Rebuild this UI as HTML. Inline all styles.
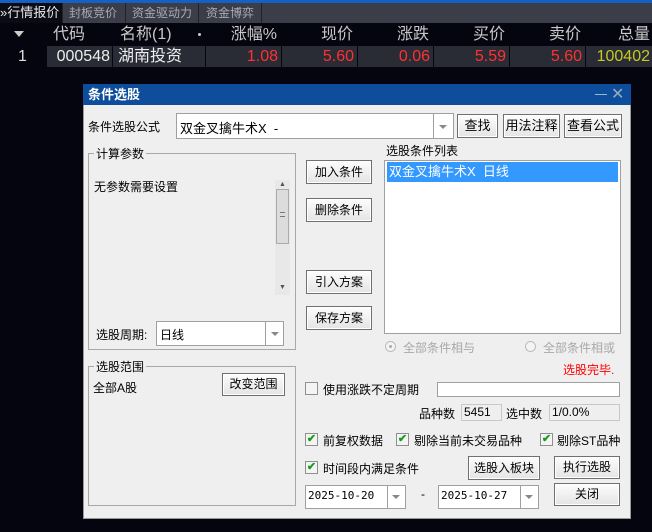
<!DOCTYPE html>
<html><head><meta charset="utf-8"><style>
*{margin:0;padding:0;box-sizing:border-box}
body{width:652px;height:532px;background:#05050f;position:relative;overflow:hidden;font-family:"Liberation Sans","Noto Sans CJK SC",sans-serif;}
.a{position:absolute;white-space:nowrap}
.tab{position:absolute;top:3px;height:20px;background:#3b3e49;color:#a8aab2;font-size:12px;line-height:20px;padding-left:6px;white-space:nowrap;overflow:hidden}
.cell{position:absolute;top:46px;height:21px;background:#2a2c35;font-size:16px;line-height:21px;text-align:right;padding-right:3px;white-space:nowrap}
.hd{position:absolute;top:24px;height:21px;color:#c8c8c8;font-size:16px;line-height:21px;text-align:right;white-space:nowrap}
.dl{font-size:12px;color:#000}
.btn{position:absolute;background:linear-gradient(#fdfdfd,#e4e4e4);border:1px solid #707070;box-shadow:inset 0 0 0 1px #fff;font-size:12px;text-align:center;color:#000;white-space:nowrap}
.box{position:absolute;background:#fff;border:1px solid #a0a0a0}
.grp{position:absolute;border:1px solid #a8a8a8}
.cb{position:absolute;width:13px;height:13px;border:1px solid #8f8f8f;background:#f4f4f4;color:#1a9a1a;font-size:11px;line-height:11px;text-align:center;font-weight:bold}
.dd{position:absolute;width:0;height:0;border-left:4px solid transparent;border-right:4px solid transparent;border-top:4px solid #888}
</style></head><body>
<div class="a" style="left:0;top:0;width:652px;height:3px;background:#1560c4"></div>
<div class="a" style="left:0;top:3px;width:652px;height:20px;background:#3b3e49"></div>
<div class="tab" style="left:0;width:62px;background:#0b0b16;color:#e8e8e8;padding-left:0;font-size:13px">»行情报价</div>
<div class="tab" style="left:62px;width:63px;border-left:1px solid #222;padding-left:6px">封板竞价</div>
<div class="tab" style="left:125px;width:73px;border-left:1px solid #222;padding-left:6px">资金驱动力</div>
<div class="tab" style="left:198px;width:64px;border-left:1px solid #222;border-right:1px solid #222;padding-left:7px">资金博弈</div>

<div class="a" style="left:14px;top:31px;border-left:5px solid transparent;border-right:5px solid transparent;border-top:6px solid #ccc"></div>
<div class="a" style="left:53px;top:24px;color:#c8c8c8;font-size:16px;line-height:21px">代码</div>
<div class="a" style="left:120px;top:24px;color:#c8c8c8;font-size:16px;line-height:21px">名称(1)</div>
<div class="a" style="left:198px;top:33px;width:3px;height:3px;background:#ccc;border-radius:2px"></div>
<div class="hd" style="left:205px;width:72px">涨幅%</div>
<div class="hd" style="left:281px;width:72px">现价</div>
<div class="hd" style="left:357px;width:72px">涨跌</div>
<div class="hd" style="left:433px;width:72px">买价</div>
<div class="hd" style="left:509px;width:72px">卖价</div>
<div class="hd" style="left:585px;width:65px">总量</div>

<div class="a" style="left:18px;top:46px;color:#ddd;font-size:16px;line-height:21px">1</div>
<div class="cell" style="left:47px;width:65px;color:#eee;padding-right:2px">000548</div>
<div class="cell" style="left:113px;width:92px;color:#eee;text-align:left;padding-left:5px">湖南投资</div>
<div class="cell" style="left:206px;width:75px;color:#ff3030">1.08</div>
<div class="cell" style="left:282px;width:75px;color:#ff3030">5.60</div>
<div class="cell" style="left:358px;width:75px;color:#ff3030">0.06</div>
<div class="cell" style="left:434px;width:75px;color:#ff3030">5.59</div>
<div class="cell" style="left:510px;width:75px;color:#ff3030">5.60</div>
<div class="cell" style="left:586px;width:66px;color:#c8c81e;padding-right:2px">100402</div>

<!-- dialog -->
<div class="a" style="left:83px;top:84px;width:548px;height:435px;background:#efefef;border:1px solid #999"></div>
<div class="a" style="left:83px;top:84px;width:548px;height:21px;background:#0d4d9b"></div>
<div class="a" style="left:88px;top:85px;color:#fff;font-size:13px;font-weight:bold;line-height:20px">条件选股</div>
<div class="a" style="left:595px;top:94px;width:12px;height:1px;background:#9bb"></div>
<div class="a" style="left:611px;top:87px;color:#9ab;font-size:16px;line-height:16px">✕</div>

<div class="a dl" style="left:88px;top:118px">条件选股公式</div>
<div class="box" style="left:176px;top:113px;width:278px;height:26px"></div>
<div class="a" style="left:433px;top:114px;width:1px;height:24px;background:#a0a0a0"></div>
<div class="dd" style="left:439px;top:125px"></div>
<div class="a dl" style="left:180px;top:118px;font-size:13px">双金叉擒牛术X&nbsp; -</div>
<div class="btn" style="left:457px;top:114px;width:41px;height:24px;line-height:22px;font-size:13px">查找</div>
<div class="btn" style="left:503px;top:114px;width:57px;height:24px;line-height:22px;font-size:13px">用法注释</div>
<div class="btn" style="left:564px;top:114px;width:58px;height:24px;line-height:22px;font-size:13px">查看公式</div>

<div class="grp" style="left:88px;top:153px;width:208px;height:197px"></div>
<div class="a dl" style="left:94px;top:145px;background:#efefef;padding:0 2px;font-size:12px">计算参数</div>
<div class="a dl" style="left:94px;top:178px;font-size:12px">无参数需要设置</div>
<div class="a" style="left:275px;top:180px;width:15px;height:115px;background:#e8e8e8"></div>
<div class="a" style="left:276px;top:189px;width:13px;height:55px;background:#dcdcdc;border:1px solid #aaa"></div>
<div class="a" style="left:280px;top:212px;width:5px;height:5px;border-top:1px solid #777;border-bottom:1px solid #777"></div>
<div class="a" style="left:279px;top:181px;color:#555;font-size:7px">▲</div>
<div class="a" style="left:279px;top:284px;color:#555;font-size:7px">▼</div>
<div class="a dl" style="left:96px;top:326px;font-size:12px">选股周期:</div>
<div class="box" style="left:156px;top:321px;width:128px;height:25px"></div>
<div class="a" style="left:265px;top:322px;width:1px;height:23px;background:#a0a0a0"></div>
<div class="dd" style="left:271px;top:332px"></div>
<div class="a dl" style="left:160px;top:326px;font-size:12px">日线</div>

<div class="btn" style="left:306px;top:160px;width:66px;height:24px;line-height:22px">加入条件</div>
<div class="btn" style="left:306px;top:198px;width:66px;height:24px;line-height:22px">删除条件</div>
<div class="btn" style="left:306px;top:270px;width:66px;height:24px;line-height:22px">引入方案</div>
<div class="btn" style="left:306px;top:306px;width:66px;height:24px;line-height:22px">保存方案</div>

<div class="a dl" style="left:386px;top:142px;font-size:12px">选股条件列表</div>
<div class="box" style="left:384px;top:160px;width:237px;height:174px"></div>
<div class="a" style="left:387px;top:162px;width:231px;height:20px;background:#3399ff;color:#fff;font-size:13px;line-height:20px;padding-left:2px">双金叉擒牛术X&nbsp; 日线</div>

<div class="a" style="left:385px;top:341px;width:11px;height:11px;border-radius:6px;border:1px solid #bbb;background:#f4f4f4"></div>
<div class="a" style="left:389px;top:345px;width:3px;height:3px;border-radius:2px;background:#aaa"></div>
<div class="a" style="left:403px;top:339px;color:#a8a8a8;font-size:12px">全部条件相与</div>
<div class="a" style="left:525px;top:341px;width:11px;height:11px;border-radius:6px;border:1px solid #bbb;background:#f4f4f4"></div>
<div class="a" style="left:543px;top:339px;color:#a8a8a8;font-size:12px">全部条件相或</div>

<div class="a" style="left:563px;top:361px;color:#ff0000;font-size:12px">选股完毕.</div>

<div class="cb" style="left:305px;top:382px"></div>
<div class="a dl" style="left:323px;top:381px;font-size:12px">使用涨跌不定周期</div>
<div class="box" style="left:437px;top:382px;width:183px;height:15px"></div>

<div class="a dl" style="left:419px;top:405px;font-size:12px">品种数</div>
<div class="a" style="left:461px;top:404px;width:41px;height:17px;border:1px solid #c8c8c8;font-size:12px;line-height:15px;padding-left:2px">5451</div>
<div class="a dl" style="left:506px;top:405px;font-size:12px">选中数</div>
<div class="a" style="left:549px;top:404px;width:71px;height:17px;border:1px solid #c8c8c8;font-size:12px;line-height:15px;padding-left:2px">1/0.0%</div>

<div class="cb" style="left:305px;top:433px">✔</div>
<div class="a dl" style="left:323px;top:432px;font-size:12px">前复权数据</div>
<div class="cb" style="left:396px;top:433px">✔</div>
<div class="a dl" style="left:414px;top:432px;font-size:12px">剔除当前未交易品种</div>
<div class="cb" style="left:540px;top:433px">✔</div>
<div class="a dl" style="left:557px;top:432px;font-size:12px">剔除ST品种</div>

<div class="cb" style="left:305px;top:461px">✔</div>
<div class="a dl" style="left:323px;top:460px;font-size:12px">时间段内满足条件</div>
<div class="btn" style="left:468px;top:456px;width:72px;height:24px;line-height:22px">选股入板块</div>
<div class="btn" style="left:554px;top:456px;width:66px;height:23px;line-height:21px">执行选股</div>

<div class="box" style="left:305px;top:485px;width:101px;height:24px"></div>
<div class="a" style="left:387px;top:486px;width:1px;height:22px;background:#a0a0a0"></div>
<div class="dd" style="left:392px;top:495px"></div>
<div class="a dl" style="left:308px;top:489px;font-family:'DejaVu Sans Mono','Liberation Mono',monospace;font-size:11px">2025-10-20</div>
<div class="a dl" style="left:421px;top:487px">-</div>
<div class="box" style="left:438px;top:485px;width:101px;height:24px"></div>
<div class="a" style="left:520px;top:486px;width:1px;height:22px;background:#a0a0a0"></div>
<div class="dd" style="left:525px;top:495px"></div>
<div class="a dl" style="left:441px;top:489px;font-family:'DejaVu Sans Mono','Liberation Mono',monospace;font-size:11px">2025-10-27</div>
<div class="btn" style="left:554px;top:483px;width:66px;height:23px;line-height:21px">关闭</div>

<div class="grp" style="left:88px;top:366px;width:208px;height:140px"></div>
<div class="a dl" style="left:94px;top:358px;background:#efefef;padding:0 2px;font-size:12px">选股范围</div>
<div class="a dl" style="left:93px;top:379px;font-size:12px">全部A股</div>
<div class="btn" style="left:222px;top:373px;width:63px;height:23px;line-height:21px">改变范围</div>
</body></html>
